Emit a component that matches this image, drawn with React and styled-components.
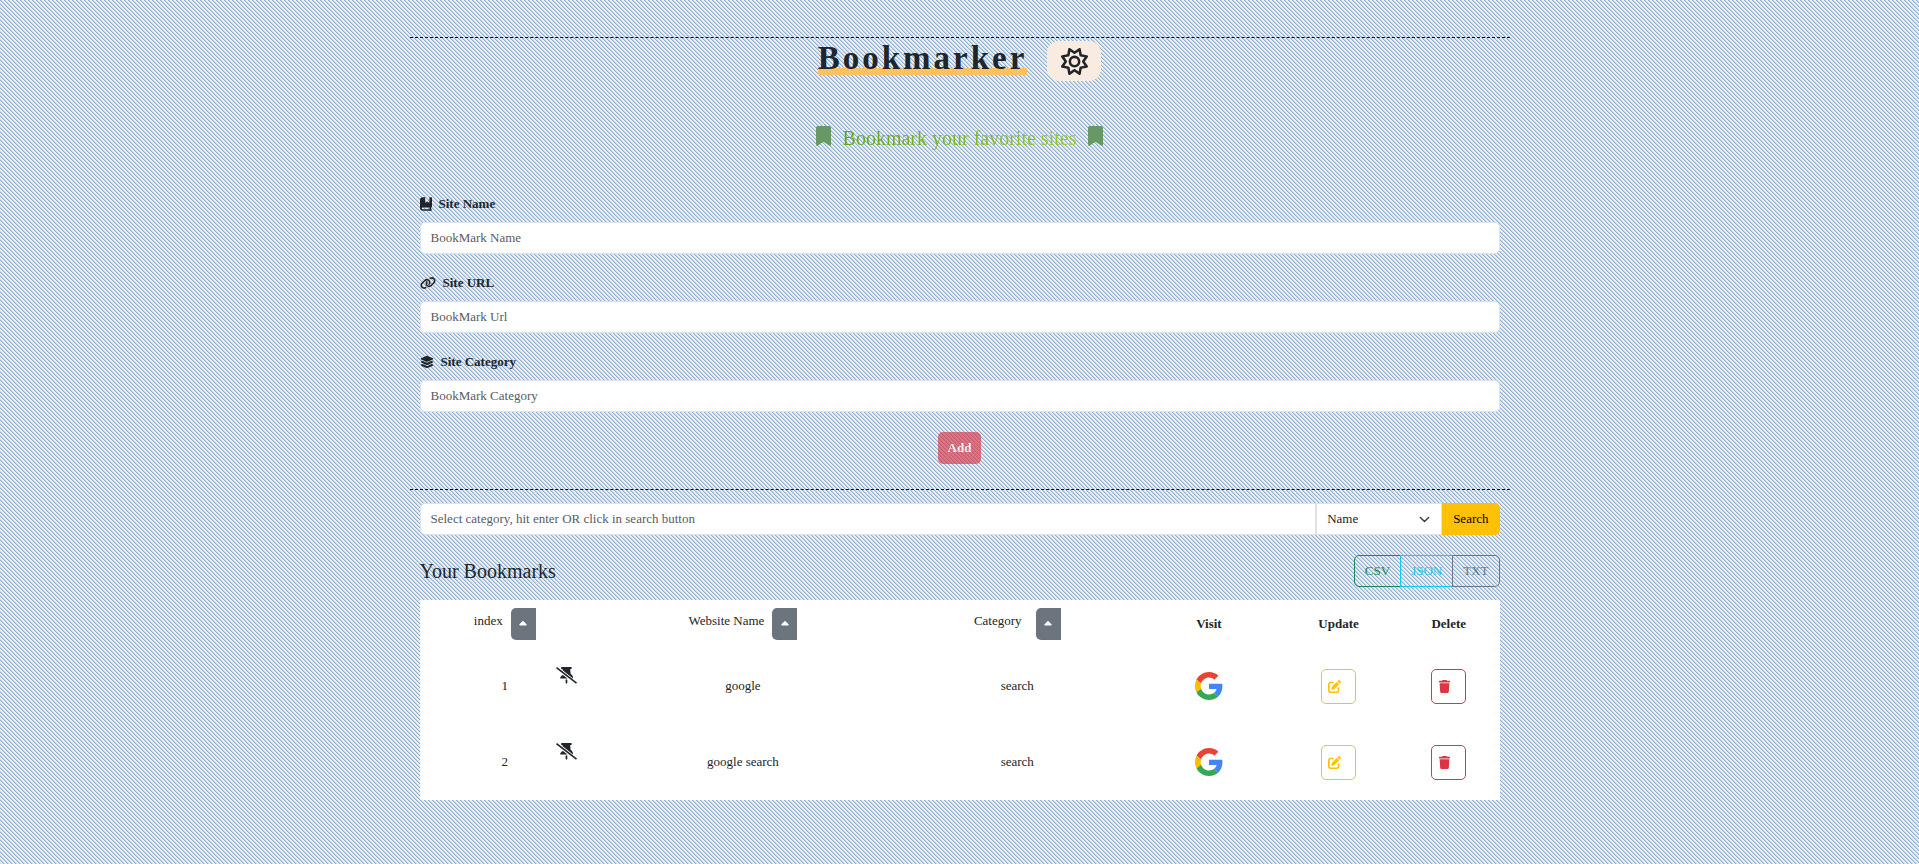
import React from "react";
import styled, { createGlobalStyle, css } from "styled-components";
import {
  FaRegSun,
  FaBookmark,
  FaBookBookmark,
  FaLink,
  FaLayerGroup,
  FaCaretUp,
  FaPenToSquare,
  FaTrash,
} from "react-icons/fa6";

const GlobalStyle = createGlobalStyle`
  *, *::before, *::after { box-sizing: border-box; }
  body {
    margin: 0;
    min-height: 100vh;
    color: #212529;
    font-family: "Liberation Serif", "Times New Roman", serif;
    font-size: 13px;
    line-height: 20px;
    background: repeating-linear-gradient(
      45deg,
      #86b3e2 0 6%,
      #c6d3e4 6% 19%,
      #f8ebdf 19% 44%,
      #86b3e2 44% 50%
    ) 0 0 / 4px 4px;
  }
  button, input, select { font: inherit; color: inherit; margin: 0; }
`;

const Page = styled.main`
  max-width: 1100px;
  margin: 0 auto;
  padding: 37px 0 62px;
`;

const Section = styled.section`
  border-top: 1px dashed #000;
  padding: ${(p) => p.$pad};
`;

const Header = styled.header`
  display: flex;
  justify-content: center;
  align-items: flex-start;
  gap: 20px;
`;

const Title = styled.h1`
  margin: 0;
  font-size: 33px;
  line-height: 40px;
  letter-spacing: 3px;
  background: linear-gradient(#ffc15e, #ffc15e) 0 30px / 100% 7px no-repeat;
`;

const SettingsButton = styled.button`
  display: flex;
  align-items: center;
  justify-content: center;
  width: 54px;
  height: 40px;
  margin-top: 3px;
  padding: 0;
  border: 0;
  border-radius: 12px;
  background: #f8ebdf;
  font-size: 27px;
`;

const Tagline = styled.p`
  display: flex;
  justify-content: center;
  gap: 12px;
  margin: 45px 0 44px;
  font-size: 20px;
  line-height: 20px;
  color: #669966;
`;

const TaglineIcon = styled(FaBookmark)`
  width: 15px;
  height: 20px;
`;

const TaglineText = styled.span`
  line-height: 24px;
  background: linear-gradient(90deg, #5fa80f, #9acd1a);
  background-clip: text;
  color: transparent;
`;

const Field = styled.div`
  margin-bottom: 19px;
`;

const Label = styled.label`
  display: flex;
  align-items: center;
  gap: 7px;
  margin-bottom: 8px;
  font-weight: 700;
  svg { width: ${(p) => p.$iconWidth}px; height: 14px; }
`;

const control = css`
  height: 32px;
  padding: 5px 10px;
  border: 1px solid #dee2e6;
  background: #fff;
  &::placeholder { color: #595c5f; opacity: 1; }
`;

const TextInput = styled.input`
  ${control}
  display: block;
  width: 100%;
  border-radius: 5px;
`;

const AddButton = styled.button`
  display: block;
  height: 32px;
  margin: 20px auto 0;
  padding: 0 10px;
  border: 0;
  border-radius: 5px;
  background: #dc3545;
  color: #fff;
  font-weight: 700;
  opacity: 0.65;
`;

const SearchBar = styled.form`
  display: flex;
`;

const SearchInput = styled.input`
  ${control}
  flex: 1;
  min-width: 0;
  border-radius: 5px 0 0 5px;
`;

const SelectWrap = styled.div`
  position: relative;
  width: 126px;
`;

const Select = styled.select`
  ${control}
  width: 100%;
  appearance: none;
  border-radius: 0;
`;

const Chevron = styled.svg`
  position: absolute;
  right: 12px;
  top: 11px;
  width: 11px;
  height: 11px;
  pointer-events: none;
`;

const SearchButton = styled.button`
  height: 32px;
  padding: 0 11px;
  border: 0;
  border-radius: 0 5px 5px 0;
  background: #ffc107;
  color: #000;
`;

const ListHeader = styled.div`
  display: flex;
  justify-content: space-between;
  align-items: center;
  margin: 20px 0 13px;
`;

const ListTitle = styled.h2`
  margin: 0;
  font-size: 20px;
  line-height: 24px;
  font-weight: 400;
`;

const ButtonGroup = styled.div`
  display: flex;
`;

const ExportButton = styled.button`
  height: 32px;
  padding: 0 10px;
  border: 1px solid ${(p) => p.$color};
  background: transparent;
  color: ${(p) => p.$color};
  & + & { margin-left: -1px; }
  &:first-child { border-radius: 5px 0 0 5px; }
  &:last-child { border-radius: 0 5px 5px 0; }
`;

const Table = styled.table`
  width: 100%;
  table-layout: fixed;
  border-collapse: collapse;
  background: #fff;
  text-align: center;
`;

const Col = styled.col`
  width: ${(p) => p.$share}%;
`;

const HeadCell = styled.th`
  height: 48px;
  padding: 0;
`;

const Cell = styled.td`
  height: 76px;
  padding: 0 5px;
`;

const SortHead = styled.div`
  display: flex;
  justify-content: center;
  gap: ${(p) => p.$gap}px;
  line-height: 26px;
  font-weight: 400;
`;

const SortButton = styled.button`
  display: flex;
  align-items: center;
  justify-content: center;
  width: 25px;
  height: 32px;
  padding: 0;
  border: 0;
  border-radius: 5px 0 0 5px;
  background: #6c757d;
  color: #fff;
  font-size: 12px;
`;

const IndexCell = styled.div`
  display: grid;
  grid-template-columns: 1fr auto 1fr;
  align-items: center;
  height: 38px;
  padding: 0 8px;
`;

const PinButton = styled.button`
  grid-column: 3;
  justify-self: end;
  align-self: start;
  display: flex;
  padding: 0;
  border: 0;
  background: none;
`;

const Number = styled.span`
  grid-column: 2;
`;

const VisitLink = styled.a`
  display: inline-flex;
  vertical-align: middle;
`;

const ActionButton = styled.button`
  display: inline-flex;
  align-items: center;
  height: 35px;
  padding: 0 14px 0 6px;
  border: 1px solid ${(p) => p.$color};
  border-radius: 5px;
  background: transparent;
  color: ${(p) => p.$color};
  font-size: 13px;
  vertical-align: middle;
`;

const PinOff = () => (
  <svg width="21" height="17" viewBox="0 0 21 17" fill="currentColor" aria-hidden="true">
    <path d="M5.2 0H15.6V1.9H14.2L14.6 6.8C15.9 7.6 16.8 8.8 17 10.6V11.4L6.4 3.1 6.6 1.9H5.2Z" />
    <path d="M7 8.1 11.5 11.6H4.1C4.2 10 5.3 8.7 7 8.1Z" />
    <path d="M9.6 12.4H11.3V15.6L10.4 17 9.6 15.6Z" />
    <path d="M1 0 21 15.5 20 16.8 0 1.3Z" />
  </svg>
);

const GoogleLogo = () => (
  <svg width="28" height="28" viewBox="0 0 48 48" aria-hidden="true">
    <path fill="#EA4335" d="M24 9.5c3.54 0 6.71 1.22 9.21 3.6l6.85-6.85C35.9 2.38 30.47 0 24 0 14.62 0 6.51 5.38 2.56 13.22l7.98 6.19C12.43 13.72 17.74 9.5 24 9.5z" />
    <path fill="#4285F4" d="M46.98 24.55c0-1.57-.15-3.09-.38-4.55H24v9.02h12.94c-.58 2.96-2.26 5.48-4.78 7.18l7.73 6c4.51-4.18 7.09-10.36 7.09-17.65z" />
    <path fill="#FBBC05" d="M10.53 28.59c-.48-1.45-.76-2.99-.76-4.59s.27-3.14.76-4.59l-7.98-6.19C.92 16.46 0 20.12 0 24c0 3.88.92 7.54 2.56 10.78l7.97-6.19z" />
    <path fill="#34A853" d="M24 48c6.48 0 11.93-2.13 15.89-5.81l-7.73-6c-2.15 1.45-4.92 2.3-8.16 2.3-6.26 0-11.57-4.22-13.47-9.91l-7.98 6.19C6.51 42.62 14.62 48 24 48z" />
  </svg>
);

const fields = [
  { id: "site-name", label: "Site Name", placeholder: "BookMark Name", Icon: FaBookBookmark, iconWidth: 12 },
  { id: "site-url", label: "Site URL", placeholder: "BookMark Url", Icon: FaLink, iconWidth: 16 },
  { id: "site-category", label: "Site Category", placeholder: "BookMark Category", Icon: FaLayerGroup, iconWidth: 14 },
];

const columnShares = [15.8, 28.3, 22.5, 13, 11, 9.4];

const bookmarks = [
  { name: "google", category: "search", url: "https://www.google.com" },
  { name: "google search", category: "search", url: "https://www.google.com" },
];

const SortableHead = ({ label, gap }) => (
  <HeadCell scope="col">
    <SortHead $gap={gap}>
      {label}
      <SortButton type="button" aria-label={`Sort by ${label}`}>
        <FaCaretUp />
      </SortButton>
    </SortHead>
  </HeadCell>
);

export default function App() {
  return (
    <>
      <GlobalStyle />
      <Page>
        <Section $pad="0 10px 25px">
          <Header>
            <Title>Bookmarker</Title>
            <SettingsButton type="button" aria-label="Theme">
              <FaRegSun />
            </SettingsButton>
          </Header>
          <Tagline>
            <TaglineIcon />
            <TaglineText>Bookmark your favorite sites</TaglineText>
            <TaglineIcon />
          </Tagline>
          <form onSubmit={(e) => e.preventDefault()}>
            {fields.map(({ id, label, placeholder, Icon, iconWidth }) => (
              <Field key={id}>
                <Label htmlFor={id} $iconWidth={iconWidth}>
                  <Icon />
                  {label}
                </Label>
                <TextInput id={id} type="text" placeholder={placeholder} />
              </Field>
            ))}
            <AddButton type="submit" disabled>Add</AddButton>
          </form>
        </Section>
        <Section $pad="13px 10px 0">
          <SearchBar onSubmit={(e) => e.preventDefault()}>
            <SearchInput
              type="text"
              aria-label="Search bookmarks"
              placeholder="Select category, hit enter OR click in search button"
            />
            <SelectWrap>
              <Select aria-label="Search by" defaultValue="name">
                <option value="name">Name</option>
                <option value="category">Category</option>
              </Select>
              <Chevron viewBox="0 0 16 16" fill="none" stroke="#343a40" strokeWidth="2" strokeLinecap="round" strokeLinejoin="round">
                <path d="m2 5 6 6 6-6" />
              </Chevron>
            </SelectWrap>
            <SearchButton type="submit">Search</SearchButton>
          </SearchBar>
          <ListHeader>
            <ListTitle>Your Bookmarks</ListTitle>
            <ButtonGroup>
              <ExportButton type="button" $color="#198754">CSV</ExportButton>
              <ExportButton type="button" $color="#0dcaf0">JSON</ExportButton>
              <ExportButton type="button" $color="#6c757d">TXT</ExportButton>
            </ButtonGroup>
          </ListHeader>
          <Table>
            <colgroup>
              {columnShares.map((share, i) => (
                <Col key={i} $share={share} />
              ))}
            </colgroup>
            <thead>
              <tr>
                <SortableHead label="index" gap={8} />
                <SortableHead label="Website Name" gap={8} />
                <SortableHead label="Category" gap={14} />
                <HeadCell scope="col">Visit</HeadCell>
                <HeadCell scope="col">Update</HeadCell>
                <HeadCell scope="col">Delete</HeadCell>
              </tr>
            </thead>
            <tbody>
              {bookmarks.map(({ name, category, url }, i) => (
                <tr key={name}>
                  <Cell>
                    <IndexCell>
                      <Number>{i + 1}</Number>
                      <PinButton type="button" aria-label={`Pin ${name}`}>
                        <PinOff />
                      </PinButton>
                    </IndexCell>
                  </Cell>
                  <Cell>{name}</Cell>
                  <Cell>{category}</Cell>
                  <Cell>
                    <VisitLink href={url} aria-label={`Visit ${name}`}>
                      <GoogleLogo />
                    </VisitLink>
                  </Cell>
                  <Cell>
                    <ActionButton type="button" $color="#ffc107" aria-label={`Update ${name}`}>
                      <FaPenToSquare />
                    </ActionButton>
                  </Cell>
                  <Cell>
                    <ActionButton type="button" $color="#dc3545" aria-label={`Delete ${name}`}>
                      <FaTrash />
                    </ActionButton>
                  </Cell>
                </tr>
              ))}
            </tbody>
          </Table>
        </Section>
      </Page>
    </>
  );
}
